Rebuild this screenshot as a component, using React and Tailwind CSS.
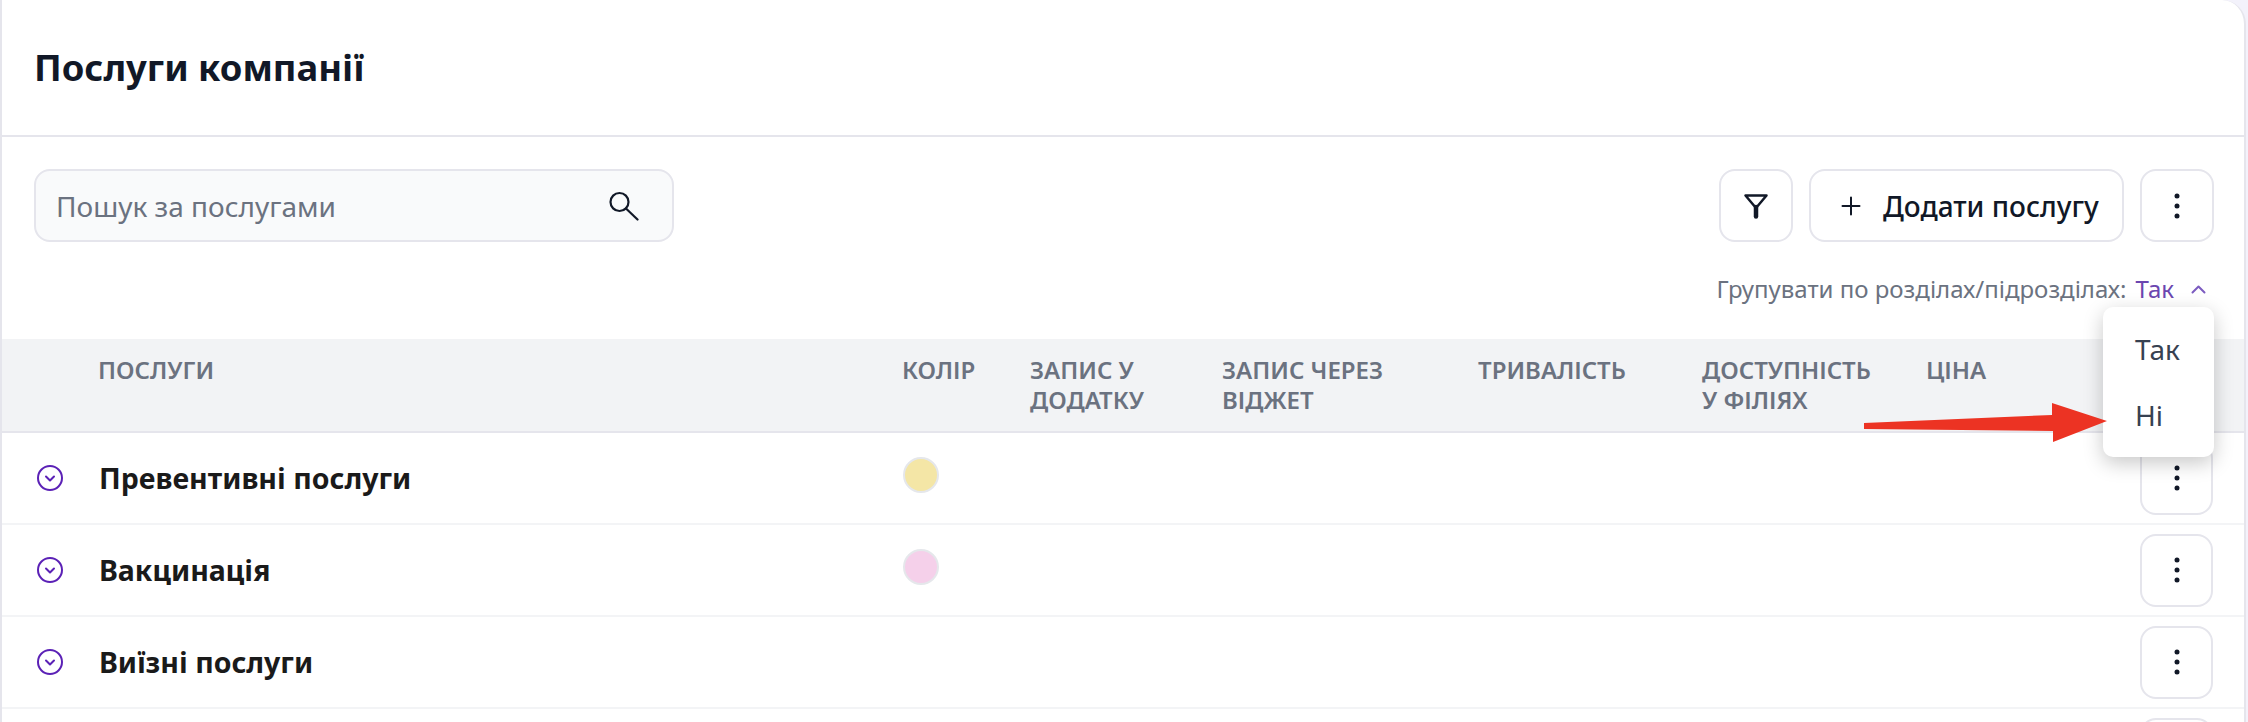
import React from 'react'

const COLUMNS = [
  { label: 'Послуги' },
  { label: 'Колір' },
  { label: 'Запис у', sub: 'додатку' },
  { label: 'Запис через', sub: 'віджет' },
  { label: 'Тривалість' },
  { label: 'Доступність', sub: 'у філіях' },
  { label: 'Ціна' },
]

const ROWS = [
  { name: 'Превентивні послуги', swatch: 'bg-[#f4e6a6]' },
  { name: 'Вакцинація', swatch: 'bg-[#f5d0ea]' },
  { name: 'Виїзні послуги' },
  { name: '' },
]

const Dots = () => (
  <svg width="6" height="26" viewBox="0 0 6 26" fill="#111827">
    <circle cx="3" cy="3" r="2.5" />
    <circle cx="3" cy="13" r="2.5" />
    <circle cx="3" cy="23" r="2.5" />
  </svg>
)

const ExpandIcon = () => (
  <svg width="26" height="26" viewBox="0 0 26 26" fill="none" stroke="#5b21b6" strokeWidth="2">
    <circle cx="13" cy="13" r="12" />
    <path d="M9 11.5l4 4 4-4" strokeLinecap="round" strokeLinejoin="round" />
  </svg>
)

const RowItem = ({ row }) => (
  <div className="h-[92px] shrink-0 border-b-2 border-[#f3f4f6] grid grid-cols-[97px_804px_1fr_73px_31px]">
    <div className="flex items-center pl-[35px]">
      {row.name && <ExpandIcon />}
    </div>
    <div className="flex items-center text-[28.5px] font-bold text-[#1a1a1a]">{row.name}</div>
    <div className="pt-[24px]">
      {row.swatch && <div className={`w-9 h-9 rounded-full border-2 border-[#e5e7eb] ${row.swatch}`} />}
    </div>
    <div className="flex items-center">
      <button className="w-[73px] h-[73px] rounded-[16px] border-2 border-[#e5e5ec] bg-white flex items-center justify-center">
        <Dots />
      </button>
    </div>
    <div />
  </div>
)

export default function App() {
  return (
    <div className="h-[722px] overflow-hidden bg-[#f3f2fb] font-['Noto_Sans',sans-serif] relative">
      <div className="w-[2246px] h-[740px] bg-white border-2 border-b-0 border-t-0 border-[#e5e5ec] rounded-tr-[24px] flex flex-col">
        <div className="h-[137px] shrink-0 pl-[32px] border-b-2 border-[#e5e5ec] flex items-center">
          <h1 className="text-[36.4px] font-bold text-[#111827]">Послуги компанії</h1>
        </div>

        <div className="h-[202px] shrink-0 relative">
          <div className="flex justify-between pl-[32px] pr-[30px] pt-[32px]">
            <div className="w-[640px] h-[73px] rounded-[16px] border-2 border-[#e5e5ec] bg-[#f9fafb] flex items-center justify-between pl-[20px] pr-[33px]">
              <span className="text-[28px] text-[#6b7280]">Пошук за послугами</span>
              <svg width="30" height="30" viewBox="0 0 30 30" fill="none" stroke="#111827" strokeWidth="2.2" strokeLinecap="round">
                <circle cx="10.5" cy="11" r="9" />
                <path d="M17 17.5L28.5 28.5" />
              </svg>
            </div>
            <div className="flex gap-4">
              <button className="w-[74px] h-[73px] rounded-[16px] border-2 border-[#e5e5ec] bg-white flex items-center justify-center">
                <svg width="26" height="26" viewBox="0 0 26 26" fill="none" stroke="#111827" strokeLinejoin="round" strokeLinecap="round">
                  <path d="M2.5 2.5h21L13 15z" strokeWidth="2.5" />
                  <path d="M13 14v9.5" strokeWidth="4.5" />
                </svg>
              </button>
              <button className="w-[315px] h-[73px] rounded-[16px] border-2 border-[#e5e5ec] bg-white flex items-center pl-[30px] gap-[22px] text-[28px] font-medium text-[#111827]">
                <svg width="20" height="20" viewBox="0 0 20 20" fill="none" stroke="#111827" strokeWidth="2" strokeLinecap="round">
                  <path d="M10 1.5v17M1.5 10h17" />
                </svg>
                <span>Додати послугу</span>
              </button>
              <button className="w-[74px] h-[73px] rounded-[16px] border-2 border-[#e5e5ec] bg-white flex items-center justify-center">
                <Dots />
              </button>
            </div>
          </div>
          <div className="flex items-center justify-end pr-[38px] mt-[29px] text-[24px] text-[#6b7280]">
            <span>Групувати по розділах/підрозділах:</span>
            <span className="ml-[9px] text-[#6b46b0]">Так</span>
            <svg className="ml-[17px]" width="15" height="9" viewBox="0 0 15 9" fill="none" stroke="#7c5cc0" strokeWidth="2" strokeLinecap="round" strokeLinejoin="round">
              <path d="M1.5 7.5L7.5 1.5l6 6" />
            </svg>
          </div>
        </div>

        <div className="h-[94px] shrink-0 bg-[#f2f3f5] border-b-2 border-[#e5e5ec] grid grid-cols-[96px_804px_128px_192px_256px_224px_224px_1fr] pt-[16px] text-[24px] leading-[30px] font-semibold uppercase text-[#6b7280]">
          <div />
          {COLUMNS.map((col) => (
            <div key={col.label}>
              <div>{col.label}</div>
              {col.sub && <div>{col.sub}</div>}
            </div>
          ))}
        </div>

        {ROWS.map((row, i) => (
          <RowItem key={i} row={row} />
        ))}
      </div>

      {/* Dropdown */}
      <div className="absolute left-[2103px] top-[307px] w-[111px] h-[150px] rounded-[10px] bg-white shadow-[0_6px_20px_rgba(0,0,0,0.22)] flex flex-col pt-[9px] pl-[32px] text-[28px] text-[#374151]">
        <div className="h-[66px] flex items-center">Так</div>
        <div className="h-[66px] flex items-center">Ні</div>
      </div>

      {/* Red annotation arrow */}
      <svg className="absolute left-[1860px] top-[400px]" width="250" height="46" viewBox="0 0 250 46" fill="#ec3323">
        <path d="M4 23L192 15V3L247 21L193 42V31L4 29z" />
      </svg>
    </div>
  )
}
